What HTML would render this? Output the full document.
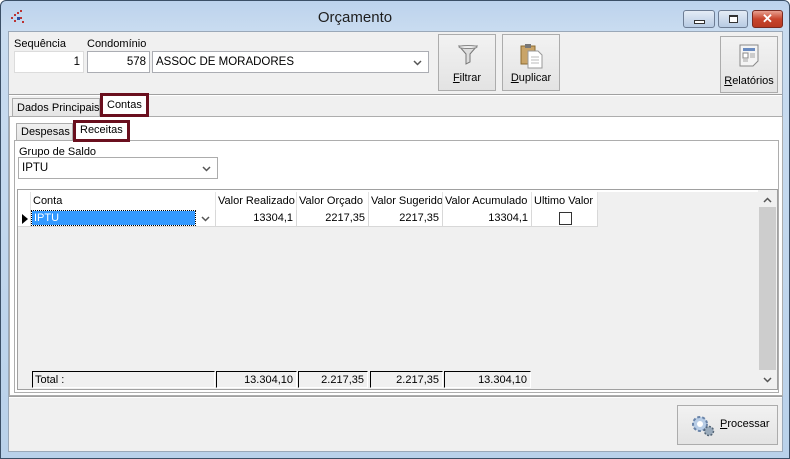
<!DOCTYPE html>
<html><head><meta charset="utf-8"><style>
*{box-sizing:border-box;margin:0;padding:0}
body{width:790px;height:459px;overflow:hidden;background:#fff;font-family:"Liberation Sans",sans-serif;font-size:11px;color:#000;position:relative}
.a{position:absolute}
.in{position:absolute;background:#fff;border:1px solid #abadb3;font-size:11.5px;line-height:20px;padding:0 3px}
.btn{position:absolute;background:linear-gradient(#f2f2f2,#e3e3e3);border:1px solid #acacac;text-align:center;font-size:11px}
.t{position:absolute;white-space:nowrap}
.gh{position:absolute;top:192px;height:18px;line-height:18px;background:#fff;border-right:1px solid #e3e3e3;padding-left:2px;white-space:nowrap;overflow:hidden}
.gc{position:absolute;top:210px;height:17px;line-height:17px;background:#fff;border-right:1px solid #d8d8d8;border-bottom:1px solid #d8d8d8;text-align:right;padding-right:3px}
.tot{position:absolute;top:371px;height:17px;line-height:16px;border-top:1px solid #000;border-left:1px solid #000;border-right:1px solid #fff;border-bottom:1px solid #fff;text-align:right;padding-right:3px;background:#f0f0f0}
.chev{position:absolute}
</style></head><body>
<div class="a" style="left:0;top:0;width:790px;height:459px;background:linear-gradient(#bcd2ec,#c9dcf0 30px,#b9d1ea);border:1px solid #3b4f66;border-radius:6px 6px 0 0"></div>
<div class="t" style="left:0;width:710px;top:9px;text-align:center;font-size:15px;color:#1e1e1e">Orçamento</div>
<svg class="a" style="left:8px;top:9px" width="18" height="18"><g fill="#b33"><rect x="3" y="8" width="2" height="2"/><rect x="6" y="5" width="2" height="2"/><rect x="9" y="3" width="2" height="2"/><rect x="12" y="1" width="2" height="2"/><rect x="6" y="11" width="2" height="2"/><rect x="12" y="8" width="2" height="2"/><rect x="14" y="12" width="2" height="2"/></g><rect x="9" y="8" width="3" height="3" fill="#3050a0"/></svg>
<div class="a" style="left:683px;top:10px;width:32px;height:18px;border:1px solid #6d7d94;border-radius:3px;background:linear-gradient(#e4ecf6,#b7cbe3)"><div class="a" style="left:10px;top:9px;width:11px;height:4px;border:1px solid #333;background:#fff"></div></div>
<div class="a" style="left:718px;top:10px;width:30px;height:18px;border:1px solid #6d7d94;border-radius:3px;background:linear-gradient(#e4ecf6,#b7cbe3)"><div class="a" style="left:10px;top:4px;width:9px;height:8px;border:1px solid #333;border-top-width:2px;background:#fff"></div></div>
<div class="a" style="left:752px;top:10px;width:31px;height:18px;border:1px solid #7a2a20;border-radius:3px;background:linear-gradient(#e8a090,#c8452d 50%,#b83a22);color:#fff;font-weight:bold;text-align:center;line-height:16px;font-size:13px">✕</div>
<div class="a" style="left:8px;top:31px;width:775px;height:421px;background:#f0f0f0;border:1px solid #9aa8b8"></div>
<div class="t" style="left:14px;top:38px">Sequência</div>
<div class="t" style="left:87px;top:38px">Condomínio</div>
<div class="in" style="left:14px;top:51px;width:70px;height:22px;text-align:right;border-color:#dcdcdc">1</div>
<div class="in" style="left:87px;top:51px;width:63px;height:22px;text-align:right">578</div>
<div class="in" style="left:152px;top:51px;width:277px;height:22px">ASSOC DE MORADORES<svg class="chev" style="right:6px;top:8px" width="9" height="6"><path d="M1 1l3.5 3.5L8 1" fill="none" stroke="#555" stroke-width="1.5"/></svg></div>
<div class="btn" style="left:438px;top:34px;width:58px;height:57px"><svg class="a" style="left:19px;top:9px" width="20" height="22"><path d="M1 2h18l-7 8v8l-4 2V10z" fill="#ddd" stroke="#777"/><ellipse cx="10" cy="3" rx="9" ry="1.5" fill="#eee" stroke="#888"/></svg><div class="t" style="left:0;width:56px;top:37px"><u>F</u>iltrar</div></div>
<div class="btn" style="left:502px;top:34px;width:58px;height:57px"><svg class="a" style="left:17px;top:8px" width="24" height="26"><rect x="1" y="3" width="14" height="18" fill="#c9a468" stroke="#8a6a30"/><rect x="5" y="1" width="6" height="4" fill="#777"/><path d="M8 8h10l4 4v13H8z" fill="#fff" stroke="#999"/><path d="M11 14h8M11 17h8M11 20h8" stroke="#bbb"/></svg><div class="t" style="left:0;width:56px;top:37px"><u>D</u>uplicar</div></div>
<div class="btn" style="left:720px;top:36px;width:58px;height:57px"><svg class="a" style="left:18px;top:7px" width="22" height="24"><path d="M1 1h18v16l-5 5H1z" fill="#f4f4f4" stroke="#888"/><rect x="4" y="4" width="12" height="3" fill="#6a8bc0"/><rect x="4" y="9" width="5" height="5" fill="#fff" stroke="#888"/><rect x="11" y="9" width="5" height="5" fill="#ccc"/><rect x="4" y="15" width="5" height="3" fill="#ccc"/></svg><div class="t" style="left:0;width:56px;top:38px"><u>R</u>elatórios</div></div>
<div class="a" style="left:9px;top:94px;width:773px;height:2px;border-top:1px solid #a0a0a0;border-bottom:1px solid #fff"></div>
<div class="a" style="left:9px;top:116px;width:774px;height:280px;background:#fff;border:1px solid #adadad"></div>
<div class="a" style="left:12px;top:98px;width:88px;height:19px;border:1px solid #adadad;background:linear-gradient(#f0f0f0,#e5e5e5)"></div>
<div class="t" style="left:17px;top:102px">Dados Principais</div>
<div class="a" style="left:100px;top:93px;width:49px;height:24px;border:3px solid #6a0f1e;background:#fff"></div>
<div class="t" style="left:107px;top:99px">Contas</div>
<div class="a" style="left:14px;top:140px;width:765px;height:253px;background:#fff;border:1px solid #adadad"></div>
<div class="a" style="left:16px;top:123px;width:57px;height:18px;border:1px solid #adadad;background:linear-gradient(#f0f0f0,#e5e5e5)"></div>
<div class="t" style="left:21px;top:126px">Despesas</div>
<div class="a" style="left:73px;top:120px;width:57px;height:22px;border:3px solid #6a0f1e;background:#fff"></div>
<div class="t" style="left:80px;top:124px">Receitas</div>
<div class="t" style="left:19px;top:146px">Grupo de Saldo</div>
<div class="in" style="left:18px;top:157px;width:200px;height:22px;border-color:#acacac">IPTU<svg class="chev" style="right:6px;top:8px" width="9" height="6"><path d="M1 1l3.5 3.5L8 1" fill="none" stroke="#555" stroke-width="1.5"/></svg></div>
<div class="a" style="left:17px;top:189px;width:761px;height:201px;background:#f0f0f0;border:1px solid #a0a0a0"></div>
<div class="a" style="left:18px;top:190px;width:740px;height:2px;background:#fff"></div>
<div class="gh" style="left:18px;width:13px"></div>
<div class="gh" style="left:31px;width:185px">Conta</div>
<div class="gh" style="left:216px;width:81px">Valor Realizado</div>
<div class="gh" style="left:297px;width:72px">Valor Orçado</div>
<div class="gh" style="left:369px;width:74px">Valor Sugerido</div>
<div class="gh" style="left:443px;width:89px">Valor Acumulado</div>
<div class="gh" style="left:532px;width:66px">Ultimo Valor</div>
<div class="gc" style="left:18px;width:13px;background:#fff"></div>
<svg class="a" style="left:21px;top:213px" width="8" height="12"><path d="M1 1l6 5-6 5z" fill="#000"/></svg>
<div class="gc" style="left:31px;width:185px;text-align:left;padding:0"><div class="a" style="left:1px;top:1px;width:163px;height:14px;background:#3399ff;outline:1px dotted #000;color:#fff;line-height:14px;padding-left:2px">IPTU</div><svg class="chev" style="right:5px;top:6px" width="9" height="6"><path d="M1 1l3.5 3.5L8 1" fill="none" stroke="#555" stroke-width="1.5"/></svg></div>
<div class="gc" style="left:216px;width:81px">13304,1</div>
<div class="gc" style="left:297px;width:72px">2217,35</div>
<div class="gc" style="left:369px;width:74px">2217,35</div>
<div class="gc" style="left:443px;width:89px">13304,1</div>
<div class="gc" style="left:532px;width:66px"><div class="a" style="left:27px;top:2px;width:13px;height:13px;border:1px solid #333;background:#fff"></div></div>
<div class="tot" style="left:32px;width:183px;text-align:left;padding-left:2px">Total :</div>
<div class="tot" style="left:216px;width:81px">13.304,10</div>
<div class="tot" style="left:298px;width:70px">2.217,35</div>
<div class="tot" style="left:370px;width:73px">2.217,35</div>
<div class="tot" style="left:444px;width:87px">13.304,10</div>
<div class="a" style="left:758px;top:190px;width:19px;height:199px;background:#f0f0f0"></div>
<div class="a" style="left:759px;top:207px;width:17px;height:163px;background:#cdcdcd"></div>
<svg class="a" style="left:763px;top:197px" width="9" height="6"><path d="M1 5l3.5-3.5L8 5" fill="none" stroke="#555" stroke-width="1.5"/></svg>
<svg class="a" style="left:763px;top:377px" width="9" height="6"><path d="M1 1l3.5 3.5L8 1" fill="none" stroke="#555" stroke-width="1.5"/></svg>
<div class="a" style="left:9px;top:396px;width:773px;height:2px;border-top:1px solid #a0a0a0;border-bottom:1px solid #fff"></div>
<div class="btn" style="left:677px;top:405px;width:101px;height:40px"><svg class="a" style="left:12px;top:8px" width="26" height="24"><circle cx="10" cy="10" r="7" fill="#b8cde6" stroke="#6a84a8" stroke-width="2" stroke-dasharray="3 2"/><circle cx="10" cy="10" r="3" fill="#fff"/><circle cx="19" cy="17" r="4.5" fill="#9ab" stroke="#567" stroke-width="1.5" stroke-dasharray="2 1.5"/></svg><div class="t" style="left:42px;top:12px"><u>P</u>rocessar</div></div>
</body></html>
